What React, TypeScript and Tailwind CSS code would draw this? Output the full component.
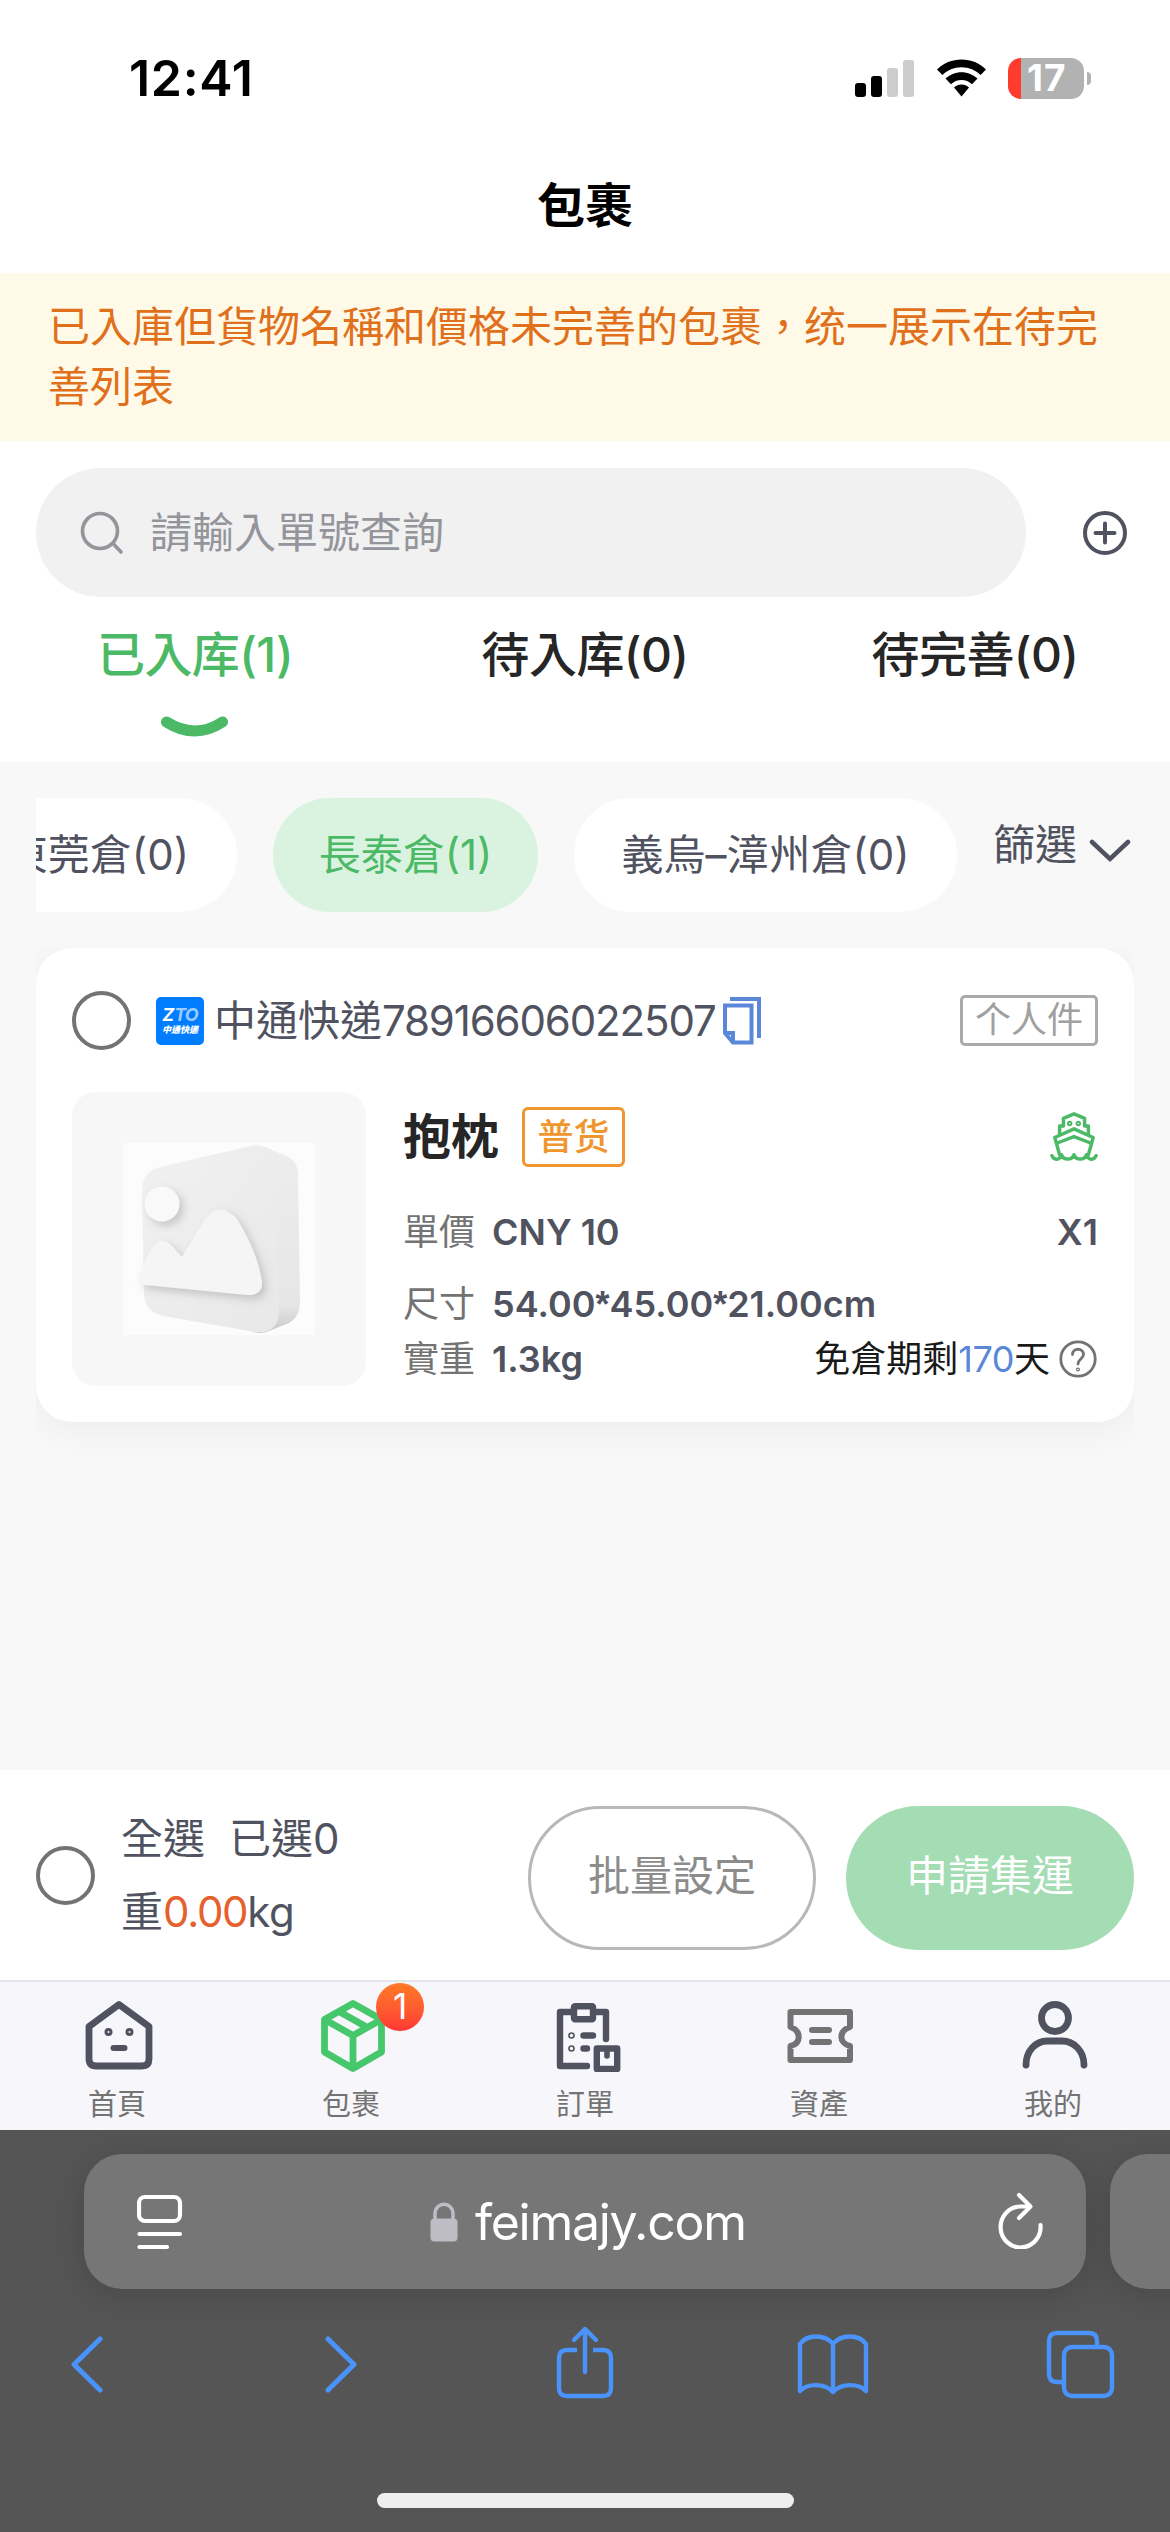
import React from 'react';

const FONT = "font-['Inter','Noto_Sans_CJK_TC',sans-serif]";

const StatusBar: React.FC = () => (
  <div className="flex h-[141px] items-start justify-between pl-[129px] pr-[79px] pt-[57px]">
    <span className="h-[42px] text-[50px] font-semibold leading-[42px] tracking-[0.7px] text-black">12:41</span>
    <div className="flex h-[42px] items-center">
      <svg width="59" height="38" viewBox="0 0 59 38">
        <rect x="0" y="24" width="11" height="14" rx="3" fill="#000" />
        <rect x="16" y="17" width="11" height="21" rx="3" fill="#000" />
        <rect x="32" y="9" width="11" height="29" rx="3" fill="#ccc" />
        <rect x="48" y="1" width="11" height="37" rx="3" fill="#ccc" />
      </svg>
      <svg className="ml-[22px]" width="51" height="38" viewBox="0 0 51 38">
        <path d="M25.5 0.5C35 .5 43.6 4.2 50 10.4L44.6 16C39.6 11.2 33 8.2 25.5 8.2S11.4 11.2 6.4 16L1 10.4C7.4 4.2 16 .5 25.5 .5Z" />
        <path d="M25.5 13.2c6.2 0 11.8 2.5 16 6.4l-5.5 5.6c-2.8-2.6-6.5-4.200-10.5-4.200s-7.7 1.6-10.5 4.200l-5.5-5.600c4.200-3.900 9.8-6.400 16-6.400Z" />
        <path d="M25.5 25.5c2.900 0 5.5 1.100 7.5 2.900L25.5 37.5 18 28.4c2-1.800 4.600-2.900 7.5-2.900Z" />
      </svg>
      <div className="ml-[21px] flex h-[41px] w-[76px] items-center rounded-[13px] bg-linear-to-r from-[#ff3a2f] from-[13px] to-[#b2b2b2] to-[13px] pl-[19px] text-[37px] font-bold leading-[40px] tracking-[1px] text-white">
        17
      </div>
      <div className="ml-[3px] h-[13px] w-[4px] rounded-r-full bg-[#b2b2b2]" />
    </div>
  </div>
);

const SearchRow: React.FC = () => (
  <div className="flex items-center pl-9 pr-[42px] pt-[27px]">
    <div className="flex h-[129px] w-[990px] items-center rounded-full bg-[#f1f1f1] pl-[44px]">
      <svg width="44" height="44" viewBox="0 0 44 44" fill="none" stroke="#93959b" strokeWidth="3.6" strokeLinecap="round">
        <circle cx="20" cy="20" r="17.5" />
        <path d="M33 32.5 41 41" />
      </svg>
      <span className="ml-[26px] text-[42px] leading-[60px] text-[#93959b]">請輸入單號查詢</span>
    </div>
    <svg className="ml-auto" width="46" height="46" viewBox="0 0 46 46" fill="none" stroke="#50535f" strokeWidth="4" strokeLinecap="round">
      <circle cx="23" cy="23" r="20" />
      <path d="M13.5 23h19M23 13.5v19" />
    </svg>
  </div>
);

const tabs = [
  { label: '已入库', count: 1 },
  { label: '待入库', count: 0 },
  { label: '待完善', count: 0 },
];

const StatusTabs: React.FC = () => (
  <div className="grid h-[165px] grid-cols-3">
    {tabs.map((tab, index) => (
      <div key={tab.label} className="flex flex-col items-center pt-[22px]">
        <span className={`text-[48px] font-medium leading-[72px] tracking-[-0.6px] ${index === 0 ? 'text-[#4cb966]' : 'text-[#262626]'}`}>
          {tab.label}({tab.count})
        </span>
        {index === 0 && (
          <svg className="mt-[25px]" width="70" height="24" viewBox="0 0 70 24" fill="none" stroke="#4cb966" strokeWidth="11" strokeLinecap="round">
            <path d="M6.5 6Q35 24 62.5 6" />
          </svg>
        )}
      </div>
    ))}
  </div>
);

const WarehouseFilter: React.FC = () => (
  <div className="flex h-[114px] items-center pl-9 text-[42px] leading-[60px] text-[#50535f]">
    <div className="flex h-[114px] w-[921px] shrink-0 justify-end gap-9 overflow-hidden whitespace-nowrap">
      <div className="flex h-full shrink-0 items-center rounded-full bg-white px-12">東莞倉(0)</div>
      <div className="flex h-full w-[265px] shrink-0 items-center justify-center rounded-full bg-[#d9f3e0] text-[#4cb966]">長泰倉(1)</div>
      <div className="flex h-full w-[383px] shrink-0 items-center justify-center rounded-full bg-white">義烏–漳州倉(0)</div>
    </div>
    <span className="-mt-5 ml-9">篩選</span>
    <svg className="-mt-2 ml-3" width="42" height="24" viewBox="0 0 42 24" fill="none" stroke="#50535f" strokeWidth="4.5" strokeLinecap="round">
      <path d="M3 3 21 20 39 3" />
    </svg>
  </div>
);

const Radio: React.FC = () => <div className="h-[59px] w-[59px] shrink-0 rounded-full border-4 border-[#737373]" />;

const PlaceholderPicture: React.FC = () => (
  <svg width="192" height="192" viewBox="0 0 192 192">
    <defs>
      <linearGradient id="side" x1="0" y1="0" x2="0" y2="1">
        <stop offset="0" stopColor="#ededed" />
        <stop offset="0.85" stopColor="#e6e6e6" />
        <stop offset="1" stopColor="#c8c8c8" />
      </linearGradient>
      <linearGradient id="face" x1="0" y1="0" x2="1" y2="1">
        <stop offset="0" stopColor="#f1f1f1" />
        <stop offset="1" stopColor="#e8e8e8" />
      </linearGradient>
      <filter id="drop" x="-20%" y="-20%" width="150%" height="150%">
        <feDropShadow dx="4" dy="4" stdDeviation="4" floodColor="#888" floodOpacity="0.4" />
      </filter>
    </defs>
    <rect width="192" height="192" fill="#fcfcfc" />
    <path d="M130 3Q136 1 142 4L163 13Q175 18 175 32L177 158Q177 174 166 180L146 188Q138 192 128 188Z" fill="url(#side)" />
    <path d="M37 24 128 3Q154 0 154 24L156 166Q156 192 132 189L40 173Q22 169 21 151L19 48Q19 29 37 24Z" fill="url(#face)" />
    <circle cx="39" cy="61" r="17.5" fill="#f9f9f9" filter="url(#drop)" />
    <path d="M17 132Q24 110 32 101Q40 93 50 104L59 114 82 76Q97 57 114 76Q134 108 139 138Q140 153 124 152L22 142Q15 140 17 132Z" fill="#f5f5f5" filter="url(#drop)" />
  </svg>
);

const Star: React.FC = () => <span className="font-['Liberation_Sans'] font-bold">*</span>;

const ParcelCard: React.FC = () => (
  <div className="mx-9 mt-9 h-[520px] overflow-hidden">
    <div className="h-[474px] rounded-[36px] bg-white px-9 pt-[43px] shadow-[0_8px_36px_rgba(0,0,0,0.050)]">
      <div className="flex h-[59px] items-center">
        <Radio />
        <div className="ml-[25px] flex h-12 w-12 flex-col items-center justify-center rounded-[5px] bg-[#007dff] italic text-white">
          <span className="text-[18px] font-bold leading-[15px]">
            Z<span className="tracking-[-1px] text-[#9ccbff]">TO</span>
          </span>
          <span className="mt-0.5 whitespace-nowrap text-[9px] font-black leading-[11px]">中通快递</span>
        </div>
        <span className="ml-[10px] text-[42px] leading-[60px] text-[#50535f]">
          中通快递<span className="tracking-[-1.15px]">78916606022507</span>
        </span>
        <svg className="ml-[6px]" width="40" height="50" viewBox="0 0 40 50" fill="none" stroke="#5b87d9" strokeWidth="4">
          <path d="M8 3H37V42" />
          <path d="M3 9.5H29.5V46.5H11L3 37ZM3 37H11V46.5" />
        </svg>
        <div className="ml-auto flex h-[51px] w-[138px] items-center justify-center rounded-[5px] border-3 border-[#aaa] pb-0.5 text-[36px] text-[#a0a0a0]">
          个人件
        </div>
      </div>

      <div className="mt-[42px] flex">
        <div className="flex h-[294px] w-[294px] shrink-0 items-center justify-center rounded-3xl bg-[#f7f7f7]">
          <PlaceholderPicture />
        </div>
        <div className="ml-[37px] flex-1 text-[36px] leading-[54px] text-[#50535f]">
          <div className="mt-[15px] flex h-[60px] items-center">
            <span className="text-[48px] font-bold text-[#262626]">抱枕</span>
            <div className="ml-[23px] flex h-[60px] w-[103px] items-center justify-center rounded-[6px] border-3 border-[#f0962e] font-medium text-[#f0962e]">
              普货
            </div>
            <svg className="ml-auto" width="48" height="52" viewBox="0 0 50 54" fill="none" stroke="#4cb966" strokeWidth="3.6" strokeLinecap="round" strokeLinejoin="round">
              <path d="M10 24V15.5H14V7.5L25 3 36 7.5V15.5H40V24" />
              <path d="M5 27.5 25 18.5 45 27.5 40 45.5M5 27.5 10 45.5M7 33.5 25 26.5 43 33.5" />
              <path d="M2 46.5C4 51.5 10 51.5 12 45.5 14 51.5 23 51.5 25 45.5 27 51.5 36 51.5 38 45.5 40 51.5 46 51.5 48 46.5" />
              <circle cx="20.5" cy="13" r="1" />
              <circle cx="29.5" cy="13" r="1" />
            </svg>
          </div>
          <div className="mt-[38px] flex">
            <span className="text-[#737373]">單價</span>
            <span className="ml-[17px] font-semibold">CNY 10</span>
            <span className="ml-auto font-semibold">X1</span>
          </div>
          <div className="mt-[18px] flex">
            <span className="text-[#737373]">尺寸</span>
            <span className="ml-[17px] font-semibold">
              54.00
              <Star />
              45.00
              <Star />
              21.00cm
            </span>
          </div>
          <div className="flex items-center">
            <span className="text-[#737373]">實重</span>
            <span className="ml-[17px] font-semibold">1.3kg</span>
            <span className="ml-auto text-[#1a1a1a]">
              免倉期剩<span className="tracking-[-0.5px] text-[#5b87d9]">170</span>天
            </span>
            <svg className="ml-2" width="40" height="40" viewBox="0 0 40 40" fill="none" stroke="#737373" strokeWidth="2.8" strokeLinecap="round">
              <circle cx="20" cy="20" r="17.2" />
              <path d="M14.5 15.5C14.5 8.5 25.5 8.5 25.5 15.5 25.5 19.5 20 20 20 25" />
              <circle cx="20" cy="30.5" r="0.6" />
            </svg>
          </div>
        </div>
      </div>
    </div>
  </div>
);

const ActionBar: React.FC = () => (
  <div className="flex h-[210px] items-center bg-white px-9 text-[42px] text-[#50535f]">
    <Radio />
    <div className="ml-[26px] leading-[73px]">
      <div>
        全選<span className="ml-6">已選0</span>
      </div>
      <div>
        重<span className="tracking-[-1.3px] text-[#e5602c]">0.00</span>
        <span className="tracking-[-0.5px]">kg</span>
      </div>
    </div>
    <div className="ml-auto mt-1.5 flex h-36 w-72 items-center justify-center rounded-full border-3 border-[#b8b8b8] pb-1.5 text-[#8c8c8c]">
      批量設定
    </div>
    <div className="ml-[30px] mt-1.5 flex h-36 w-72 items-center justify-center rounded-full bg-[#a4dcb4] pb-1.5 text-white">申請集運</div>
  </div>
);

const HomeIcon: React.FC = () => (
  <svg width="72" height="72" viewBox="0 0 72 72" fill="none" stroke="#50535f" strokeWidth="6.8" strokeLinecap="round" strokeLinejoin="round">
    <path d="M38 4.500 68 26.500V59Q68 66 61 66H15Q8 66 8 59V26.500Z" />
    <path d="M32.500 48H43.500" strokeWidth="6" />
    <circle cx="27.500" cy="32" r="1.500" strokeWidth="5" />
    <circle cx="48.500" cy="32" r="1.500" strokeWidth="5" />
  </svg>
);

const PackageIcon: React.FC = () => (
  <svg width="72" height="72" viewBox="0 0 72 72" fill="none" stroke="#47c76b" strokeWidth="6.8" strokeLinejoin="round">
    <path d="M38 3.500 66.500 19.500V52L38 68.500 9.500 52V19.500ZM9.500 19.500 38 35.500 66.500 19.500M38 35.500V68.500M24 11.500 52.500 27.500" />
  </svg>
);

const OrderIcon: React.FC = () => (
  <svg width="72" height="72" viewBox="0 0 72 72" fill="none" stroke="#50535f" strokeWidth="6.4" strokeLinecap="round" strokeLinejoin="round">
    <path d="M22 12H11V66H38M46 12H57V39" />
    <rect x="25" y="6.200" width="19" height="13" rx="1" />
    <path d="M34.500 35.500H44M34.500 48.500H38" />
    <circle cx="22.500" cy="35.500" r="0.800" strokeWidth="5" />
    <circle cx="22.500" cy="48.500" r="0.800" strokeWidth="5" />
    <path d="M47.800 48.500H68.200V69H47.800Z" />
    <path d="M58 49V56" strokeWidth="5.600" />
  </svg>
);

const TicketIcon: React.FC = () => (
  <svg width="72" height="72" viewBox="0 0 72 72" fill="none" stroke="#737373" strokeWidth="6" strokeLinecap="round" strokeLinejoin="round">
    <path d="M7.500 12H67V27C55.500 31 55.500 43 67 46V60H7.500V46C18.500 43 18.500 31 7.500 27Z" />
    <path d="M29 30H46M29 42H46" />
  </svg>
);

const UserIcon: React.FC = () => (
  <svg width="72" height="72" viewBox="0 0 72 72" fill="none" stroke="#50535f" strokeWidth="6.8" strokeLinecap="round">
    <circle cx="38" cy="18" r="13.500" />
    <path d="M9 65C9 51 18.500 41 30.500 41H45C57 41 67 51 67 65" />
  </svg>
);

const navItems = [
  { label: '首頁', Icon: HomeIcon },
  { label: '包裹', Icon: PackageIcon, badge: 1 },
  { label: '訂單', Icon: OrderIcon },
  { label: '資產', Icon: TicketIcon },
  { label: '我的', Icon: UserIcon },
];

const BottomNav: React.FC = () => (
  <div className="grid h-[150px] grid-cols-5 border-t-2 border-[#e6e6ea] bg-[#f7f6fb]">
    {navItems.map(({ label, Icon, badge }) => (
      <div key={label} className="relative flex flex-col items-center pt-[18px]">
        <Icon />
        <span className="mt-[11px] text-[29px] leading-[44px] text-[#737373]">{label}</span>
        {badge && (
          <span className="absolute left-[142px] top-px h-12 w-12 rounded-full bg-linear-to-b from-[#ff7a25] to-[#ff3636] text-center text-[35px] leading-[47px] text-white">
            {badge}
          </span>
        )}
      </div>
    ))}
  </div>
);

const BrowserBar: React.FC = () => (
  <div className="flex h-[402px] flex-col overflow-hidden bg-[#555] pt-6">
    <div className="flex h-[135px] gap-6 pl-[84px]">
      <div className="flex w-[1002px] shrink-0 items-center rounded-[38px] bg-[#767676] pl-[53px] pr-[42px] shadow-[0_6px_36px_rgba(0,0,0,0.160)]">
        <svg width="46" height="64" viewBox="0 0 46 64" fill="none" stroke="#fff" strokeWidth="4.2" strokeLinecap="round">
          <rect x="2" y="7" width="41" height="24" rx="6" />
          <path d="M2.500 44H43M2.500 57H30" />
        </svg>
        <div className="ml-[247px] flex items-center">
          <svg width="28" height="40" viewBox="0 0 28 40">
            <rect x="0.5" y="16.5" width="27" height="23" rx="4" fill="#bebdc5" />
            <path d="M5 18V12C5-1 23-1 23 12V18" fill="none" stroke="#bebdc5" strokeWidth="3.5" />
          </svg>
          <span className="ml-[17px] text-[50px] leading-[64px] tracking-[-1.3px] text-white">feimajy.com</span>
        </div>
        <svg className="-mt-1 ml-auto" width="48" height="58" viewBox="0 0 48 58" fill="none" stroke="#fff" strokeWidth="4.2" strokeLinecap="round" strokeLinejoin="round">
          <path d="M33 15.500H24A20 20.500 0 1 0 44.500 34" />
          <path d="M23 4 34.500 15.500 23 27" />
        </svg>
      </div>
      <div className="w-[120px] shrink-0 rounded-[38px] bg-[#767676] shadow-[0_6px_36px_rgba(0,0,0,0.160)]" />
    </div>
    <div className="mt-[35px] flex h-[80px] items-center pl-[69px] text-[#4a93fb]">
      <svg width="35" height="58" viewBox="0 0 35 58" fill="none" stroke="currentColor" strokeWidth="5" strokeLinecap="round" strokeLinejoin="round">
        <path d="M31 4 5 29.500 31 55" />
      </svg>
      <svg className="ml-[220px]" width="35" height="58" viewBox="0 0 35 58" fill="none" stroke="currentColor" strokeWidth="5" strokeLinecap="round" strokeLinejoin="round">
        <path d="M4 4 30 29.500 4 55" />
      </svg>
      <svg className="-mt-1 ml-[196px]" width="60" height="74" viewBox="0 0 60 74" fill="none" stroke="currentColor" strokeWidth="4.4" strokeLinecap="round" strokeLinejoin="round">
        <path d="M22 25H12Q4 25 4 33V63Q4 71 12 71H48Q56 71 56 63V33Q56 25 48 25H38" strokeLinecap="butt" />
        <path d="M30 47V4M19 15 30 4 41 15" />
      </svg>
      <svg className="ml-[181px]" width="74" height="64" viewBox="0 0 74 64" fill="none" stroke="currentColor" strokeWidth="4.4" strokeLinecap="round" strokeLinejoin="round">
        <path d="M37 60V12C29 2 11 2 4 12V59C11 51 29 51 37 60 45 51 63 51 70 59V12C63 2 45 2 37 12" />
      </svg>
      <svg className="ml-[175px]" width="70" height="70" viewBox="0 0 70 70" fill="none" stroke="currentColor" strokeWidth="4.4">
        <path d="M18 53H12Q4 53 4 45V12Q4 4 12 4H44Q52 4 52 12V18" />
        <rect x="19" y="18" width="48" height="49" rx="8" />
      </svg>
    </div>
    <div className="mx-auto mb-6 mt-auto h-[15px] w-[417px] rounded-full bg-[#eee]" />
  </div>
);

export default function App() {
  return (
    <div lang="zh-Hant" className={`flex h-[2532px] w-[1170px] flex-col overflow-hidden bg-white ${FONT}`}>
      <StatusBar />
      <div className="flex h-[132px] items-center justify-center pb-[3px] text-[48px] font-bold text-black">包裹</div>
      <div className="bg-[#fffae8] px-12 py-6 text-[42px] leading-[60px] text-[#e0701c]">
        已入庫但貨物名稱和價格未完善的包裹，统一展示在待完善列表
      </div>
      <SearchRow />
      <StatusTabs />
      <div className="flex-1 bg-[#f8f8f8] pt-9">
        <WarehouseFilter />
        <ParcelCard />
      </div>
      <ActionBar />
      <BottomNav />
      <BrowserBar />
    </div>
  );
}
